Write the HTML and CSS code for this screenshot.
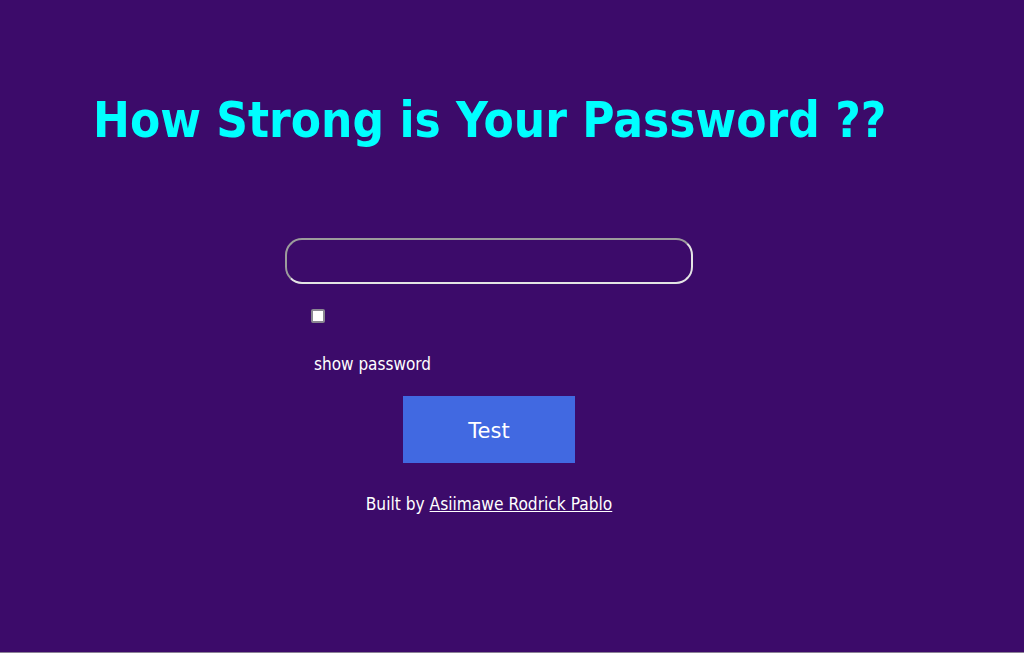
FILE: index.html
```html
<!DOCTYPE html>
<html lang="en">
<head>
<meta charset="utf-8">
<title>Password Strength</title>
<link rel="stylesheet" href="styles.css">
</head>
<body>
<div class="page">
  <h1 class="title">How Strong is Your Password ??</h1>
  <form class="form">
    <input class="pw-input" type="password">
    <input class="show-box" type="checkbox" id="show">
    <label class="show-label" for="show">show password</label>
    <button class="test-btn" type="button">Test</button>
    <p class="credit">Built by <a class="credit-link" href="#">Asiimawe Rodrick Pablo</a></p>
  </form>
</div>
<div class="edge"></div>
</body>
</html>
```
FILE: styles.css
```css
html, body {
  margin: 0;
  padding: 0;
}
body {
  background: #3c0b6a;
  font-family: "DejaVu Sans Condensed", "DejaVu Sans", sans-serif;
  color: #ffffff;
  overflow: hidden;
}
.page {
  height: 652px;
  overflow: hidden;
}
.title {
  margin: 92px 0 0 93px;
  font-size: 49px;
  line-height: 57px;
  font-weight: bold;
  color: #00ffff;
}
.form {
  width: 408px;
  margin: 89px 0 0 285px;
  display: flex;
  flex-direction: column;
}
.pw-input {
  box-sizing: border-box;
  width: 408px;
  height: 46px;
  margin: 0;
  border: 2px solid;
  border-color: #9c9c9c #e4e4e4 #e4e4e4 #9c9c9c;
  border-radius: 17px;
  background: transparent;
  outline: none;
}
.show-box {
  -webkit-appearance: none;
  appearance: none;
  box-sizing: border-box;
  width: 14px;
  height: 14px;
  margin: 25px 0 0 26px;
  border: 2px solid #8a8791;
  border-radius: 2px;
  background: #ffffff;
  align-self: flex-start;
}
.show-label {
  margin: 31px 0 0 29px;
  font-size: 17px;
  line-height: 20px;
  color: #ffffff;
  align-self: flex-start;
}
.test-btn {
  align-self: center;
  box-sizing: border-box;
  width: 172px;
  height: 67px;
  margin: 22px 0 0;
  border: none;
  background: #4169e1;
  color: #ffffff;
  font-family: "DejaVu Sans", sans-serif;
  font-size: 21px;
  padding: 2px 0 0;
}
.credit {
  margin: 31px 0 0;
  text-align: center;
  font-size: 17.2px;
  line-height: 20px;
}
.credit-link {
  color: #ffffff;
}
.edge {
  height: 1px;
  background: #8b8196;
}
```
